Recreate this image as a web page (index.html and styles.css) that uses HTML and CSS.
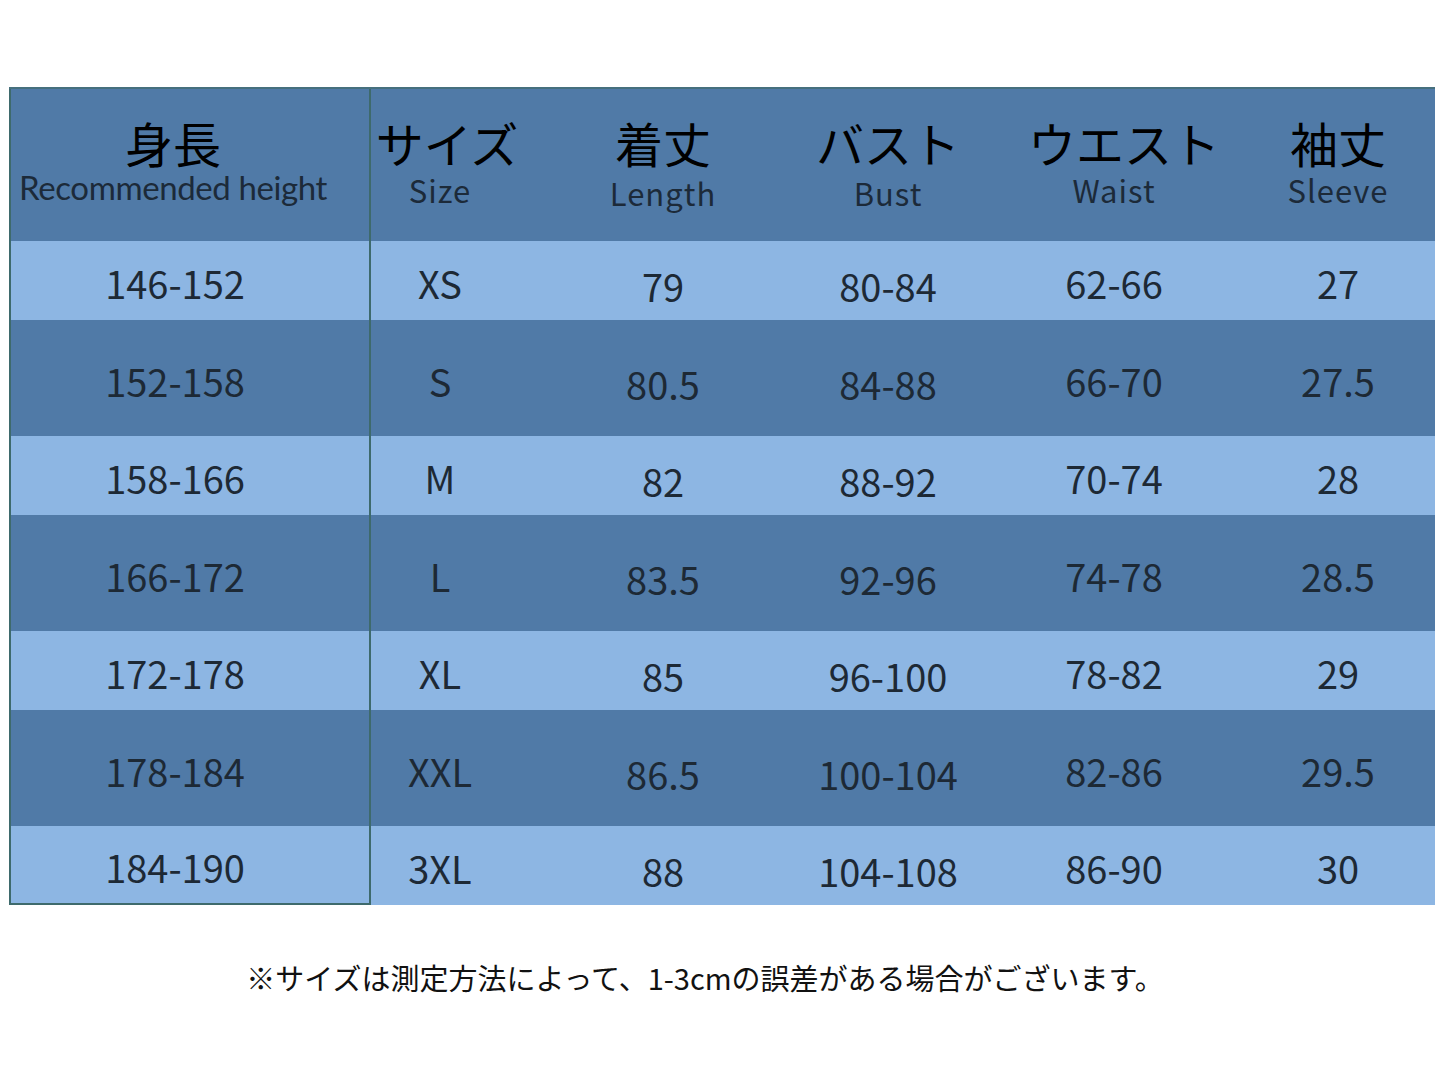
FILE: index.html
```html
<!DOCTYPE html>
<html lang="ja">
<head>
<meta charset="utf-8">
<title>サイズ表</title>
<link rel="stylesheet" href="styles.css">
</head>
<body>
<div class="chart">
  <div class="row head">
    <div class="cell c1"><span class="jp">身長</span><span class="en en-lato">Recommended height</span></div>
    <div class="cell c2"><span class="jp jp-size">サイズ</span><span class="en">Size</span></div>
    <div class="cell c3 low"><span class="jp">着丈</span><span class="en">Length</span></div>
    <div class="cell c4 low"><span class="jp">バスト</span><span class="en">Bust</span></div>
    <div class="cell c5"><span class="jp jp-waist">ウエスト</span><span class="en">Waist</span></div>
    <div class="cell c6"><span class="jp">袖丈</span><span class="en">Sleeve</span></div>
  </div>
  <div class="row light">
    <div class="cell c1">146-152</div><div class="cell c2">XS</div><div class="cell c3 low">79</div><div class="cell c4 low">80-84</div><div class="cell c5">62-66</div><div class="cell c6">27</div>
  </div>
  <div class="row dark">
    <div class="cell c1">152-158</div><div class="cell c2">S</div><div class="cell c3 low">80.5</div><div class="cell c4 low">84-88</div><div class="cell c5">66-70</div><div class="cell c6">27.5</div>
  </div>
  <div class="row light">
    <div class="cell c1">158-166</div><div class="cell c2">M</div><div class="cell c3 low">82</div><div class="cell c4 low">88-92</div><div class="cell c5">70-74</div><div class="cell c6">28</div>
  </div>
  <div class="row dark">
    <div class="cell c1">166-172</div><div class="cell c2">L</div><div class="cell c3 low">83.5</div><div class="cell c4 low">92-96</div><div class="cell c5">74-78</div><div class="cell c6">28.5</div>
  </div>
  <div class="row light">
    <div class="cell c1">172-178</div><div class="cell c2">XL</div><div class="cell c3 low">85</div><div class="cell c4 low">96-100</div><div class="cell c5">78-82</div><div class="cell c6">29</div>
  </div>
  <div class="row dark">
    <div class="cell c1">178-184</div><div class="cell c2">XXL</div><div class="cell c3 low">86.5</div><div class="cell c4 low">100-104</div><div class="cell c5">82-86</div><div class="cell c6">29.5</div>
  </div>
  <div class="row light last">
    <div class="cell c1">184-190</div><div class="cell c2">3XL</div><div class="cell c3 low">88</div><div class="cell c4 low">104-108</div><div class="cell c5">86-90</div><div class="cell c6">30</div>
  </div>
</div>
<p class="note">※サイズは測定方法によって、1-3cmの誤差がある場合がございます。</p>
</body>
</html>
```

FILE: styles.css
```css
html, body {
  margin: 0;
  padding: 0;
  background: #ffffff;
}

body {
  width: 1440px;
  height: 1074px;
  overflow: hidden;
  font-family: "Noto Sans CJK JP", "Noto Sans", sans-serif;
}

.chart {
  margin: 87px 0 0 9px;
  width: 1426px;
  border-top: 2px solid #46707e;
  box-sizing: border-box;
}

.row {
  display: grid;
  grid-template-columns: 362px 138px 308px 142px 310px 138px 28px;
  color: #1d2935;
  font-size: 38px;
  line-height: 1;
}

.row.head {
  height: 152px;
  background: #507aa7;
}

.row.light {
  height: 79px;
  background: #8db6e3;
}

.row.dark {
  height: 116px;
  background: #507aa7;
}

.cell {
  display: flex;
  align-items: center;
  justify-content: center;
  padding-top: 5px;
  box-sizing: border-box;
  white-space: nowrap;
}

.cell.low {
  padding-top: 11px;
}

.c1 {
  border-left: 2px solid #3e6a6c;
  border-right: 2px solid #3e6a6c;
  padding-right: 30px;
}

.row.last .c1 {
  border-bottom: 2px solid #3e6a6c;
}

.head .cell {
  flex-direction: column;
  justify-content: flex-start;
  padding-top: 31px;
}

.head .cell.low {
  padding-top: 31px;
}

.head .c1 {
  padding-right: 34px;
}

.jp {
  color: #000000;
  font-family: "Noto Sans CJK JP", sans-serif;
  font-weight: 400;
  font-size: 48px;
  line-height: 44px;
  letter-spacing: 0;
}

.jp-size {
  margin-left: 14px;
}

.jp-waist {
  margin-left: 20px;
}

.en {
  color: #1c2a39;
  font-family: "Noto Sans CJK JP", "Noto Sans", sans-serif;
  font-size: 31px;
  line-height: 26px;
  letter-spacing: 1px;
  margin-top: 13px;
}

.head .low .en {
  margin-top: 16px;
}

.en-lato {
  font-family: Lato, "Noto Sans", sans-serif;
  font-size: 33px;
  letter-spacing: -0.4px;
  margin-top: 10px;
}

.note {
  margin: 52px 0 0 0;
  padding-right: 30px;
  text-align: center;
  font-family: "Noto Sans CJK JP", sans-serif;
  font-weight: 400;
  font-size: 29px;
  line-height: 40px;
  color: #111111;
}
```
